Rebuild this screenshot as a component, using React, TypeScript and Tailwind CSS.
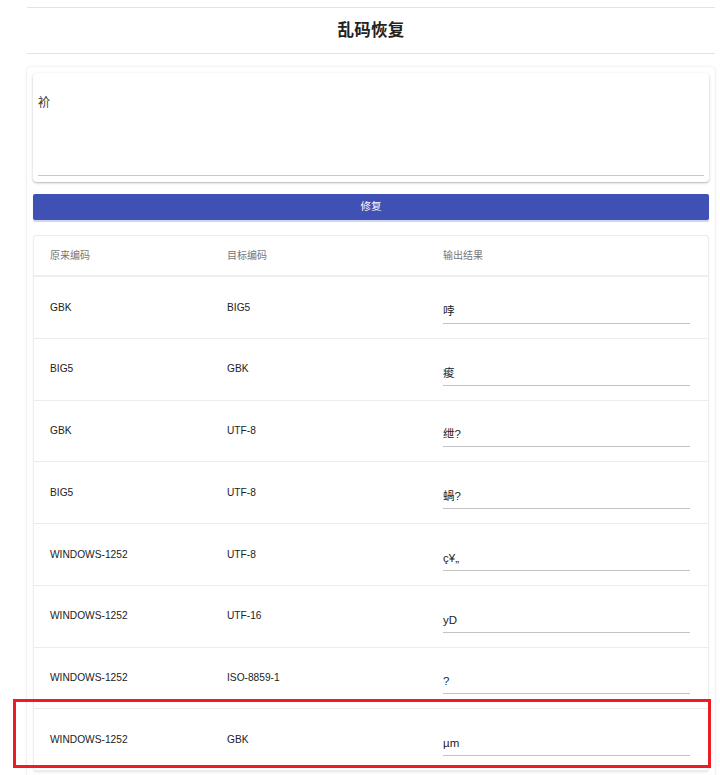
import React from "react";

const rows: [string, string, string][] = [
  ["GBK", "BIG5", "哱"],
  ["BIG5", "GBK", "痠"],
  ["GBK", "UTF-8", "绁?"],
  ["BIG5", "UTF-8", "蝸?"],
  ["WINDOWS-1252", "UTF-8", "ç¥„"],
  ["WINDOWS-1252", "UTF-16", "yD"],
  ["WINDOWS-1252", "ISO-8859-1", "?"],
  ["WINDOWS-1252", "GBK", "µm"],
];

export default function App() {
  return (
    <div
      className="relative w-[720px] h-[775px] overflow-hidden bg-white text-[#212121]"
      style={{ fontFamily: '"Liberation Sans", "Noto Sans CJK SC", sans-serif' }}
    >
      <div className="ml-[27px] w-[688px] pt-[7px]">
        <div className="h-[47px] border-y border-[#e3e3e3] flex items-center justify-center">
          <h1 className="text-[16.5px] font-bold text-[#222] leading-none tracking-[0.3px]">乱码恢复</h1>
        </div>
        <div className="mt-[13px] rounded-[4px] bg-white shadow-[0_0_3px_rgba(0,0,0,0.12),0_1px_2px_rgba(0,0,0,0.06)] p-[6px] pb-[40px]">
          <div className="h-[109px] rounded-[4px] bg-white shadow-[0_1px_3px_rgba(0,0,0,0.22),0_1px_1px_rgba(0,0,0,0.1)] px-[5px] pt-[23px] flex flex-col">
            <div className="text-[12px] leading-[14px] text-[#333]">衸</div>
            <div className="mt-auto mb-[6px] border-b border-[#c8c8c8]" />
          </div>
          <button className="mt-[12px] w-full h-[26px] bg-[#3f51b5] text-white text-[10.5px] rounded-[2px] shadow-[0_2px_1px_rgba(63,81,181,0.25)] flex items-center justify-center">
            修复
          </button>
          <div className="mt-[15px] rounded-[3px] border border-[#ececec] bg-white shadow-[0_1px_2px_rgba(0,0,0,0.05)]">
            <div className="h-[41px] grid grid-cols-[177px_216px_1fr] pl-[16px] pr-[18px] items-center border-b-2 border-[#eeeeee] text-[10px] text-[#757575]">
              <div>原来编码</div>
              <div>目标编码</div>
              <div>输出结果</div>
            </div>
            {rows.map((r, i) => (
              <div
                key={i}
                className="h-[61.75px] grid grid-cols-[177px_216px_1fr] pl-[16px] pr-[18px] items-center border-b border-[#ececec] text-[10.2px] text-[#222]"
              >
                <div>{r[0]}</div>
                <div>{r[1]}</div>
                <div className="h-[32px] pt-[11px] mt-[1px] border-b border-[#c4c4c4]">
                  <div className="text-[11.5px] leading-[16px] text-[#222]">{r[2]}</div>
                </div>
              </div>
            ))}
          </div>
        </div>
      </div>
      <div className="absolute left-[13px] top-[699px] w-[698px] h-[69px] border-[3px] border-[#ed1c24] pointer-events-none" />
    </div>
  );
}
